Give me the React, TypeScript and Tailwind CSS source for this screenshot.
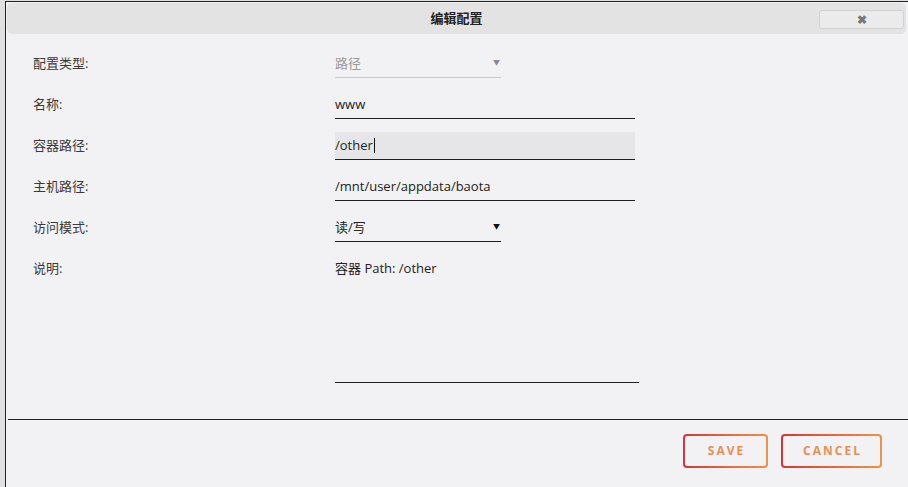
import React from 'react'

const font = { fontFamily: '"Open Sans", "Noto Sans CJK SC", sans-serif' }

function Row({ label, children }: { label: string; children: React.ReactNode }) {
  return (
    <div className="flex items-start">
      <div className="w-[302px] shrink-0 h-[28px] flex items-center text-[13px] text-[#3a3a3a]">{label}</div>
      {children}
    </div>
  )
}

function TextField({ value, focused, caret }: { value: string; focused?: boolean; caret?: boolean }) {
  return (
    <div
      className={`w-[300px] h-[28px] flex items-center border-b border-[#1f1f1f] text-[13px] text-[#222] ${
        focused ? 'bg-[#e6e6e8]' : ''
      }`}
    >
      <span>{value}</span>
      {caret && <span className="inline-block w-px h-[15px] bg-[#111] ml-[1px]" />}
    </div>
  )
}

function SelectField({ value, muted }: { value: string; muted?: boolean }) {
  return (
    <div
      className={`w-[166px] h-[28px] flex items-center justify-between border-b text-[13px] ${
        muted ? 'border-[#c8c8c8] text-[#9a9a9a]' : 'border-[#1f1f1f] text-[#222]'
      }`}
    >
      <span>{value}</span>
      <span className={`mr-[1px] text-[7px] ${muted ? 'text-[#8a8a8a]' : 'text-[#111]'}`}>▼</span>
    </div>
  )
}

function GradientButton({ label, width }: { label: string; width: string }) {
  return (
    <div className={`${width} h-[34px] p-[2px] rounded-[4px] bg-gradient-to-r from-[#d2343a] to-[#e9924e]`}>
      <div className="w-full h-full rounded-[2px] bg-[#f2f1f3] flex items-center justify-center">
        <span className="text-[12px] font-bold tracking-[2px] text-[#e8904f] pl-[2px]">{label}</span>
      </div>
    </div>
  )
}

export default function App() {
  return (
    <div className="w-[908px] h-[487px] overflow-hidden bg-[#e0e0e0] pl-[5px] pt-px flex" style={font}>
      <div className="flex-1 flex flex-col border-l border-t border-[#222] bg-[#f2f1f3]">
        {/* title bar */}
        <div className="mt-px ml-[1px] mr-[2px] h-[31px] rounded-[5px] bg-[#e3e3e3] flex items-center relative">
          <div className="flex-1 text-center text-[13px] font-bold text-[#222]">编辑配置</div>
          <div className="absolute right-[2px] top-[7px] w-[85px] h-[19px] rounded-[3px] border border-[#d2d2d2] bg-[#ebebeb] flex items-center justify-center text-[12px] text-[#777] font-bold">
            ✖
          </div>
        </div>

        {/* form */}
        <div className="pl-[27px] pt-[16px] flex flex-col gap-[13px]">
          <Row label="配置类型:">
            <SelectField value="路径" muted />
          </Row>
          <Row label="名称:">
            <TextField value="www" />
          </Row>
          <Row label="容器路径:">
            <TextField value="/other" focused caret />
          </Row>
          <Row label="主机路径:">
            <TextField value="/mnt/user/appdata/baota" />
          </Row>
          <Row label="访问模式:">
            <SelectField value="读/写" />
          </Row>
          <Row label="说明:">
            <div className="w-[304px] h-[128px] border-b border-[#1f1f1f] text-[13px] text-[#222] pt-[4px]">
              容器 Path: /other
            </div>
          </Row>
        </div>

        {/* footer */}
        <div className="mt-[36px] ml-[2px] border-t border-[#222] flex justify-end gap-[13px] pr-[26px] pt-[14px]">
          <GradientButton label="SAVE" width="w-[85px]" />
          <GradientButton label="CANCEL" width="w-[101px]" />
        </div>
      </div>
    </div>
  )
}
